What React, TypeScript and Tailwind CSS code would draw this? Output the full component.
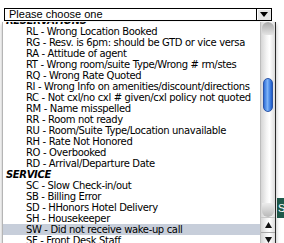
import React from "react";

const reservation = [
  "RL - Wrong Location Booked",
  "RG - Resv. is 6pm: should be GTD or vice versa",
  "RA - Attitude of agent",
  "RT - Wrong room/suite Type/Wrong # rm/stes",
  "RQ - Wrong Rate Quoted",
  "RI - Wrong Info on amenities/discount/directions",
  "RC - Not cxl/no cxl # given/cxl policy not quoted",
  "RM - Name misspelled",
  "RR - Room not ready",
  "RU - Room/Suite Type/Location unavailable",
  "RH - Rate Not Honored",
  "RO - Overbooked",
  "RD - Arrival/Departure Date",
];

const service = [
  "SC - Slow Check-in/out",
  "SB - Billing Error",
  "SD - HHonors Hotel Delivery",
  "SH - Housekeeper",
  "SW - Did not receive wake-up call",
  "SF - Front Desk Staff",
];

function Header({ label }: { label: string }) {
  return (
    <div className="h-[11px] leading-[11px] pl-[3px] font-bold italic">{label}</div>
  );
}

function Item({ label, active }: { label: string; active?: boolean }) {
  return (
    <div
      className={`h-[11px] leading-[11px] pl-[23px] whitespace-nowrap ${
        active ? "bg-[#c7ceda]" : ""
      }`}
    >
      {label}
    </div>
  );
}

export default function App() {
  return (
    <div className="relative w-[284px] h-[243px] bg-white overflow-hidden font-['Liberation_Sans',sans-serif] text-black">
      {/* page behind the menu */}
      <div className="pt-[8px] pl-[4px]">
        <div className="flex w-[268px] h-[13px] border border-black">
          <div className="flex-1 flex items-center pl-[4px] text-[11px] leading-none">
            Please choose one
          </div>
          <div className="w-[15px] flex items-center justify-center border-l border-black bg-[#e6e6e6] shadow-[inset_1px_1px_0_#fff]">
            <svg width="8" height="5" viewBox="0 0 8 5">
              <path d="M0 0h8L4 5z" fill="#000" />
            </svg>
          </div>
        </div>
      </div>
      <div className="absolute left-[277px] top-[198px] w-[20px] h-[20px] bg-[#1f5a4b] text-white text-[11px] leading-[20px] pl-[1px]">
        Se
      </div>

      {/* open list */}
      <div className="absolute left-[2px] top-[22px] w-[274px] h-[230px] bg-white border-l border-[#b5b5b5] border-r border-r-[#2a2a2a] flex shadow-[0_2px_4px_rgba(0,0,0,0.3)]">
        <div className="flex-1 overflow-hidden text-[10px] tracking-[-0.35px] font-['DejaVu_Sans',sans-serif]">
          <div className="-mt-[7px]">
            <Header label="RESERVATIONS" />
            {reservation.map((r) => (
              <Item key={r} label={r} />
            ))}
            <Header label="SERVICE" />
            {service.map((s) => (
              <Item key={s} label={s} active={s.startsWith("SW")} />
            ))}
          </div>
        </div>

        {/* scrollbar */}
        <div className="w-[15px] flex flex-col bg-[linear-gradient(to_right,#d6d6d6,#f4f4f4_40%,#ffffff_60%,#dcdcdc)] border-l border-[#bdbdbd]">
          <div className="h-[13px] rounded-t-full bg-[linear-gradient(to_bottom,#a8a8a8,#e4e4e4)] mx-[1px]" />
          <div className="h-[43px]" />
          <div className="h-[34px] mx-[2px] rounded-full border border-[#2c55a8] bg-[linear-gradient(to_right,#2f6fd8,#7fb4f8_45%,#5a98ee_60%,#1f5bc8)]" />
          <div className="flex-1" />
          <div className="h-[14px] rounded-b-full bg-[linear-gradient(to_top,#b8b8b8,#ececec)] mx-[1px]" />
          <div className="h-[15px] flex items-center justify-center border-t border-[#c8c8c8]">
            <svg width="7" height="6" viewBox="0 0 7 6">
              <path d="M3.5 0L7 6H0z" fill="#111" />
            </svg>
          </div>
          <div className="h-[15px] flex items-center justify-center border-t border-[#a8a8a8]">
            <svg width="7" height="6" viewBox="0 0 7 6">
              <path d="M0 0h7L3.5 6z" fill="#111" />
            </svg>
          </div>
          <div className="h-[5px]" />
        </div>
      </div>
    </div>
  );
}
